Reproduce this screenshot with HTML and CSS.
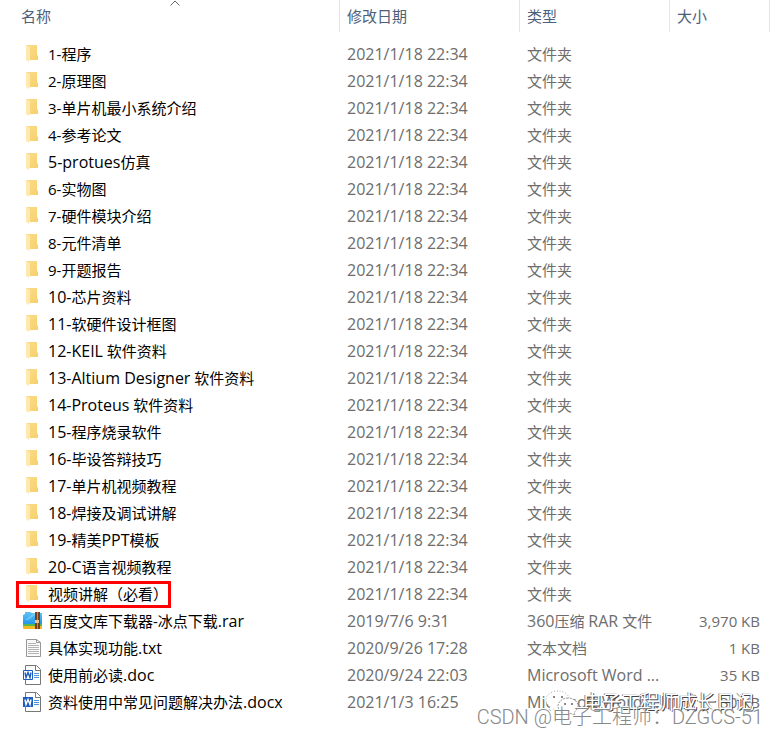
FILE: index.html
```html
<!DOCTYPE html>
<html lang="zh-CN">
<head>
  <meta charset="UTF-8">
  <meta name="viewport" content="width=device-width, initial-scale=1.0">
  <title>文件列表</title>
  <link rel="stylesheet" href="styles.css">
</head>
<body>
  <!-- Icon shapes -->
  <svg class="sprite" aria-hidden="true">
    <defs>
      <linearGradient id="folderBack" x1="0" y1="0" x2="1" y2="1">
        <stop offset="0" stop-color="#fbdc8c"/>
        <stop offset="1" stop-color="#f6d06a"/>
      </linearGradient>
      <linearGradient id="rarBlue" x1="0" y1="0" x2="0" y2="1">
        <stop offset="0" stop-color="#5ec4f8"/>
        <stop offset="1" stop-color="#2197e8"/>
      </linearGradient>
    </defs>
    <symbol id="folder" viewBox="0 0 20 20">
      <path d="M4 1h11v10l1 1v4H5z" fill="url(#folderBack)"/>
      <path d="M4 1l4 2v12l-1 3-3-2z" fill="#ffe9ae"/>
    </symbol>
    <symbol id="rar" viewBox="0 0 20 20">
      <path d="M1 13h20v4q0 1-1 1H2q-1 0-1-1z" fill="#f5b921"/>
      <path d="M1 12h20v3H1z" fill="#57b84a"/>
      <path d="M1 4l2-1V1h5l2 1h10v11H1z" fill="url(#rarBlue)"/>
      <path d="M3 9l9-7h4L6 9z" fill="#8ad6fb" opacity=".6"/>
      <path d="M13 1h5v17h-5z" fill="#7a3f1d"/>
      <path d="M15 1h1v17h-1z" fill="#c98a4b"/>
      <path d="M13 9h4v3h-4z" fill="#e9c48c"/>
    </symbol>
    <symbol id="txt" viewBox="0 0 20 20">
      <path d="M4.5 1.5h10l4 3v14h-14z" fill="#fafafa" stroke="#979797"/>
      <path d="M14.5 1.5v3h4" fill="none" stroke="#979797"/>
      <path d="M6 5.5h8M6 7.5h11M6 9.5h11M6 11.5h11M6 13.5h11M6 15.5h11" stroke="#b4b4b4"/>
    </symbol>
    <symbol id="doc" viewBox="0 0 20 20">
      <path d="M3.5.5h11l4 4v15h-15z" fill="#fff" stroke="#777"/>
      <path d="M13.5.5v5h5" fill="none" stroke="#777"/>
      <path d="M12 8.5h5M12 10.5h5M12 12.5h5" stroke="#4d94df"/>
      <path d="M1.5 5.5h9v9h-9z" fill="#fff" stroke="#1e5dbe"/>
      <path d="M3 7.5l1 5 2-5 2 5 1-5" fill="none" stroke="#1e5dbe" stroke-width="1.4"/>
    </symbol>
    <symbol id="docx" viewBox="0 0 20 20">
      <path d="M3.5.5h11l4 4v15h-15z" fill="#fff" stroke="#777"/>
      <path d="M13.5.5v5h5" fill="none" stroke="#777"/>
      <path d="M12 8.5h5M12 10.5h5M12 12.5h5" stroke="#4d94df"/>
      <path d="M1 5h10v10H1z" fill="#1e5dbe"/>
      <path d="M3 7.5l1 5 2-5 2 5 1-5" fill="none" stroke="#fff" stroke-width="1.4"/>
    </symbol>
  </svg>

  <main class="explorer">
    <table class="files">
      <colgroup>
        <col>
        <col class="col-date">
        <col class="col-type">
        <col class="col-size">
      </colgroup>
      <thead>
        <tr>
          <th aria-sort="ascending">
            <button class="sort" type="button">名称</button>
            <svg class="arrow" viewBox="0 0 10 6" aria-hidden="true"><path d="M.5 5.5L5 1l4.5 4.5" fill="none" stroke="#666"/></svg>
          </th>
          <th><button class="sort" type="button">修改日期</button></th>
          <th><button class="sort" type="button">类型</button></th>
          <th><button class="sort" type="button">大小</button></th>
        </tr>
      </thead>
      <tbody>
        <tr><td><span class="file"><svg class="icon"><use href="#folder"/></svg>1-程序</span></td><td class="date">2021/1/18 22:34</td><td>文件夹</td><td></td></tr>
        <tr><td><span class="file"><svg class="icon"><use href="#folder"/></svg>2-原理图</span></td><td class="date">2021/1/18 22:34</td><td>文件夹</td><td></td></tr>
        <tr><td><span class="file"><svg class="icon"><use href="#folder"/></svg>3-单片机最小系统介绍</span></td><td class="date">2021/1/18 22:34</td><td>文件夹</td><td></td></tr>
        <tr><td><span class="file"><svg class="icon"><use href="#folder"/></svg>4-参考论文</span></td><td class="date">2021/1/18 22:34</td><td>文件夹</td><td></td></tr>
        <tr><td><span class="file"><svg class="icon"><use href="#folder"/></svg><span><span class="latin">5-protues</span>仿真</span></span></td><td class="date">2021/1/18 22:34</td><td>文件夹</td><td></td></tr>
        <tr><td><span class="file"><svg class="icon"><use href="#folder"/></svg>6-实物图</span></td><td class="date">2021/1/18 22:34</td><td>文件夹</td><td></td></tr>
        <tr><td><span class="file"><svg class="icon"><use href="#folder"/></svg>7-硬件模块介绍</span></td><td class="date">2021/1/18 22:34</td><td>文件夹</td><td></td></tr>
        <tr><td><span class="file"><svg class="icon"><use href="#folder"/></svg>8-元件清单</span></td><td class="date">2021/1/18 22:34</td><td>文件夹</td><td></td></tr>
        <tr><td><span class="file"><svg class="icon"><use href="#folder"/></svg>9-开题报告</span></td><td class="date">2021/1/18 22:34</td><td>文件夹</td><td></td></tr>
        <tr><td><span class="file"><svg class="icon"><use href="#folder"/></svg><span><span class="latin">10-</span>芯片资料</span></span></td><td class="date">2021/1/18 22:34</td><td>文件夹</td><td></td></tr>
        <tr><td><span class="file"><svg class="icon"><use href="#folder"/></svg><span><span class="latin">11-</span>软硬件设计框图</span></span></td><td class="date">2021/1/18 22:34</td><td>文件夹</td><td></td></tr>
        <tr><td><span class="file"><svg class="icon"><use href="#folder"/></svg><span><span class="latin">12-KEIL</span> 软件资料</span></span></td><td class="date">2021/1/18 22:34</td><td>文件夹</td><td></td></tr>
        <tr><td><span class="file"><svg class="icon"><use href="#folder"/></svg><span><span class="latin">13-Altium Designer</span> 软件资料</span></span></td><td class="date">2021/1/18 22:34</td><td>文件夹</td><td></td></tr>
        <tr><td><span class="file"><svg class="icon"><use href="#folder"/></svg><span><span class="latin">14-Proteus</span> 软件资料</span></span></td><td class="date">2021/1/18 22:34</td><td>文件夹</td><td></td></tr>
        <tr><td><span class="file"><svg class="icon"><use href="#folder"/></svg><span><span class="latin">15-</span>程序烧录软件</span></span></td><td class="date">2021/1/18 22:34</td><td>文件夹</td><td></td></tr>
        <tr><td><span class="file"><svg class="icon"><use href="#folder"/></svg><span><span class="latin">16-</span>毕设答辩技巧</span></span></td><td class="date">2021/1/18 22:34</td><td>文件夹</td><td></td></tr>
        <tr><td><span class="file"><svg class="icon"><use href="#folder"/></svg><span><span class="latin">17-</span>单片机视频教程</span></span></td><td class="date">2021/1/18 22:34</td><td>文件夹</td><td></td></tr>
        <tr><td><span class="file"><svg class="icon"><use href="#folder"/></svg><span><span class="latin">18-</span>焊接及调试讲解</span></span></td><td class="date">2021/1/18 22:34</td><td>文件夹</td><td></td></tr>
        <tr><td><span class="file"><svg class="icon"><use href="#folder"/></svg><span><span class="latin">19-</span>精美<span class="latin">PPT</span>模板</span></span></td><td class="date">2021/1/18 22:34</td><td>文件夹</td><td></td></tr>
        <tr><td><span class="file"><svg class="icon"><use href="#folder"/></svg><span><span class="latin">20-C</span>语言视频教程</span></span></td><td class="date">2021/1/18 22:34</td><td>文件夹</td><td></td></tr>
        <tr><td><span class="file marked"><svg class="icon"><use href="#folder"/></svg>视频讲解（必看）</span></td><td class="date">2021/1/18 22:34</td><td>文件夹</td><td></td></tr>
        <tr><td><span class="file"><svg class="icon"><use href="#rar"/></svg><span>百度文库下载器-冰点下载<span class="latin">.rar</span></span></span></td><td class="date">2019/7/6 9:31</td><td><span class="latin">360</span>压缩 <span class="latin">RAR</span> 文件</td><td>3,970 KB</td></tr>
        <tr><td><span class="file"><svg class="icon"><use href="#txt"/></svg><span>具体实现功能<span class="latin">.txt</span></span></span></td><td class="date">2020/9/26 17:28</td><td>文本文档</td><td>1 KB</td></tr>
        <tr><td><span class="file"><svg class="icon"><use href="#doc"/></svg><span>使用前必读<span class="latin">.doc</span></span></span></td><td class="date">2020/9/24 22:03</td><td><span class="latin">Microsoft Word ...</span></td><td>35 KB</td></tr>
        <tr><td><span class="file"><svg class="icon"><use href="#docx"/></svg><span>资料使用中常见问题解决办法<span class="latin">.docx</span></span></span></td><td class="date">2021/1/3 16:25</td><td><span class="latin">Microsoft Word ...</span></td><td>30 KB</td></tr>
      </tbody>
    </table>

    <!-- Watermarks -->
    <div class="account">
      <svg class="wechat" viewBox="0 0 34 26" aria-hidden="true">
        <path d="M13 1C6 1 1 5 1 10c0 3 2 5 4 7l-1 4 5-2c2 .5 4 .5 6 0l9-11C23 4 19 1 13 1z" fill="#fff" stroke="#aaa" stroke-dasharray="1 2"/>
        <path d="M23 8c-6 0-10 4-10 8s4 8 10 8l3-.5 4 2-1-3c2-1.500 4-4 4-6.500 0-4-4-8-10-8z" fill="#fff" stroke="#999" stroke-dasharray="2 1"/>
        <path d="M9 6v2M17 6v2M20 13v2M27 13v2" stroke="#888" stroke-width="2"/>
      </svg>
      <span>电子工程师成长日记</span>
    </div>
    <div class="credit">CSDN @电子工程师：DZGCS-51</div>
  </main>
</body>
</html>
```
FILE: styles.css
```css
* {
  margin: 0;
  padding: 0;
  box-sizing: border-box;
}

body {
  background: #fff;
  color: #000;
  font-family: "Open Sans", "Noto Sans CJK SC", sans-serif;
  font-size: 15px;
  line-height: 27px;
}

.sprite {
  position: absolute;
  width: 0;
  height: 0;
}

.explorer {
  position: relative;
  min-height: 100vh;
  padding-right: 8px;
}

.files {
  width: 100%;
  table-layout: fixed;
  border-collapse: separate;
  border-spacing: 0;
}

.col-date {
  width: 180px;
}

.col-type {
  width: 150px;
}

.col-size {
  width: 100px;
}

.files th {
  position: relative;
  height: 32px;
  padding-left: 7px;
  border-right: 1px solid #e5e5e5;
  text-align: left;
  vertical-align: middle;
}

.files th:first-child {
  padding-left: 21px;
}

.sort {
  display: block;
  border: none;
  background: none;
  color: #4c607a;
  font: inherit;
  font-weight: normal;
  cursor: pointer;
}

.arrow {
  position: absolute;
  top: 0;
  left: 50%;
  width: 10px;
  height: 6px;
}

/* space between the header and the first row */
.files tbody::before {
  content: "";
  display: block;
  height: 9px;
}

.files td {
  height: 27px;
  padding-left: 7px;
  color: #6d6d6d;
  white-space: nowrap;
  vertical-align: top;
}

.files td:first-child {
  padding-left: 16px;
  color: #000;
}

.files td:last-child {
  padding-right: 10px;
  text-align: right;
}

/* Latin letters and digits run a size larger than the Chinese text */
.date,
.latin {
  font-size: 16px;
}

.latin {
  line-height: 1;
}

.file {
  display: flex;
  align-items: center;
  gap: 6px;
  width: fit-content;
  height: 27px;
  padding-left: 3px;
  border: 3px solid transparent;
}

.file.marked {
  border-color: #f00;
}

.icon {
  width: 20px;
  height: 20px;
  margin-bottom: 2px;
  overflow: visible;
}

.account {
  position: absolute;
  right: 24px;
  bottom: 20px;
  display: flex;
  align-items: center;
  gap: 4px;
  color: #fff;
  font-size: 19px;
  text-shadow: 1px 1px 0 #444, -1px 0 0 #888;
}

.wechat {
  width: 34px;
  height: 26px;
}

.credit {
  position: absolute;
  right: 15px;
  bottom: 5px;
  color: #888;
  font-family: Roboto, "Noto Sans CJK TC", sans-serif;
  font-size: 20px;
  font-weight: 300;
  text-shadow: -1px -1px 0 #fff;
}
```
